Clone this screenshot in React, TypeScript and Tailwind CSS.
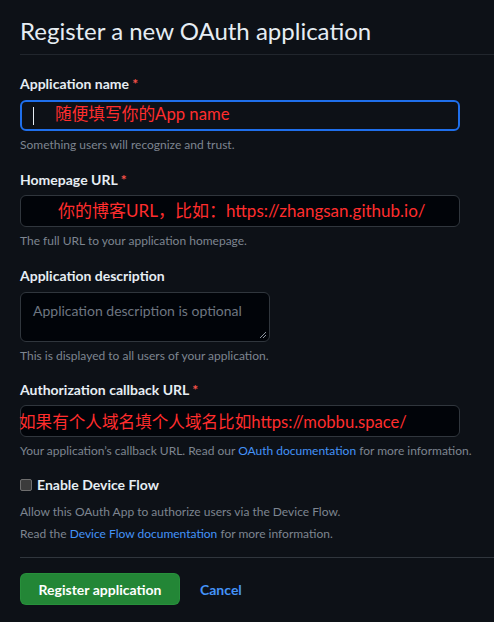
import React from "react";

export default function App() {
  return (
    <div className="w-[494px] h-[622px] bg-[#0d1117] text-[#e6edf3] overflow-hidden font-['Lato','Noto_Sans_CJK_SC',sans-serif]">
      <div className="pl-5">
        <div className="pt-[13px] pb-[5px] border-b border-[#21262d]">
          <h1 className="text-[24px] leading-[36px] font-normal text-[#e6edf3]">Register a new OAuth application</h1>
        </div>

        {/* Application name */}
        <div className="mt-[18px]">
          <div className="text-[14px] leading-[21px] font-bold">
            Application name <span className="text-[#f85149]">*</span>
          </div>
          <div className="mt-[6px] w-[440px] h-[31px] rounded-[6px] border-2 border-[#1f6feb] bg-[#0d1117] flex items-center">
            <div className="ml-[11px] w-px h-[18px] bg-[#e6edf3]" />
            <span className="ml-[21px] -mt-[2px] text-[16.7px] text-[#ff2d2d] whitespace-nowrap">随便填写你的App name</span>
          </div>
          <div className="mt-[5px] text-[12px] leading-[18px] text-[#7d8590]">Something users will recognize and trust.</div>
        </div>

        {/* Homepage URL */}
        <div className="mt-[15px]">
          <div className="text-[14px] leading-[21px] font-bold">
            Homepage URL <span className="text-[#f85149]">*</span>
          </div>
          <div className="mt-[5px] w-[440px] h-[32px] rounded-[6px] border border-[#30363d] bg-[#010409] flex items-center">
            <span className="ml-[37px] text-[17px] text-[#ff2d2d] whitespace-nowrap">你的博客URL，比如：https://zhangsan.github.io/</span>
          </div>
          <div className="mt-[5px] text-[12px] leading-[18px] text-[#7d8590]">The full URL to your application homepage.</div>
        </div>

        {/* Description */}
        <div className="mt-[15px]">
          <div className="text-[14px] leading-[21px] font-bold">Application description</div>
          <div className="relative mt-[6px] w-[250px] h-[50px] rounded-[6px] border border-[#30363d] bg-[#010409]">
            <div className="pl-[12px] pt-[7px] text-[14px] leading-[21px] text-[#6e7681]">Application description is optional</div>
            <svg className="absolute right-[2px] bottom-[2px]" width="8" height="8" viewBox="0 0 8 8">
              <line x1="1" y1="7" x2="7" y2="1" stroke="#8b949e" strokeWidth="1" />
              <line x1="4" y1="7" x2="7" y2="4" stroke="#8b949e" strokeWidth="1" />
            </svg>
          </div>
          <div className="mt-[5px] text-[12px] leading-[18px] text-[#7d8590]">This is displayed to all users of your application.</div>
        </div>

        {/* Callback URL */}
        <div className="mt-[14px]">
          <div className="text-[14px] leading-[21px] font-bold">
            Authorization callback URL <span className="text-[#f85149]">*</span>
          </div>
          <div className="mt-[5px] w-[440px] h-[32px] rounded-[6px] border border-[#30363d] bg-[#010409] flex items-center overflow-visible">
            <span className="-ml-[2px] mt-[3px] text-[16.6px] text-[#ff2d2d] whitespace-nowrap">如果有个人域名填个人域名比如https://mobbu.space/</span>
          </div>
          <div className="mt-[5px] text-[12px] leading-[18px] text-[#7d8590] whitespace-nowrap">
            Your application’s callback URL. Read our <span className="text-[#4493f8]">OAuth documentation</span> for more information.
          </div>
        </div>

        {/* Device flow */}
        <div className="mt-[14px] flex items-center gap-[5px]">
          <div className="w-[12px] h-[12px] rounded-[2px] bg-[#3b3b3b] border border-[#6e6e6e]" />
          <span className="text-[14px] leading-[21px] font-bold">Enable Device Flow</span>
        </div>
        <div className="mt-[8px] text-[12px] leading-[18px] text-[#7d8590]">Allow this OAuth App to authorize users via the Device Flow.</div>
        <div className="mt-[4px] text-[12px] leading-[18px] text-[#7d8590]">
          Read the <span className="text-[#4493f8]">Device Flow documentation</span> for more information.
        </div>

        <div className="mt-[14px] border-t border-[#30363d]" />

        <div className="mt-[15px] flex items-center">
          <button className="w-[160px] h-[32px] rounded-[6px] bg-[#238636] border border-[#2ea043]/40 text-white text-[14px] font-bold">Register application</button>
          <span className="ml-[20px] text-[14px] font-bold text-[#4493f8]">Cancel</span>
        </div>
      </div>
    </div>
  );
}
